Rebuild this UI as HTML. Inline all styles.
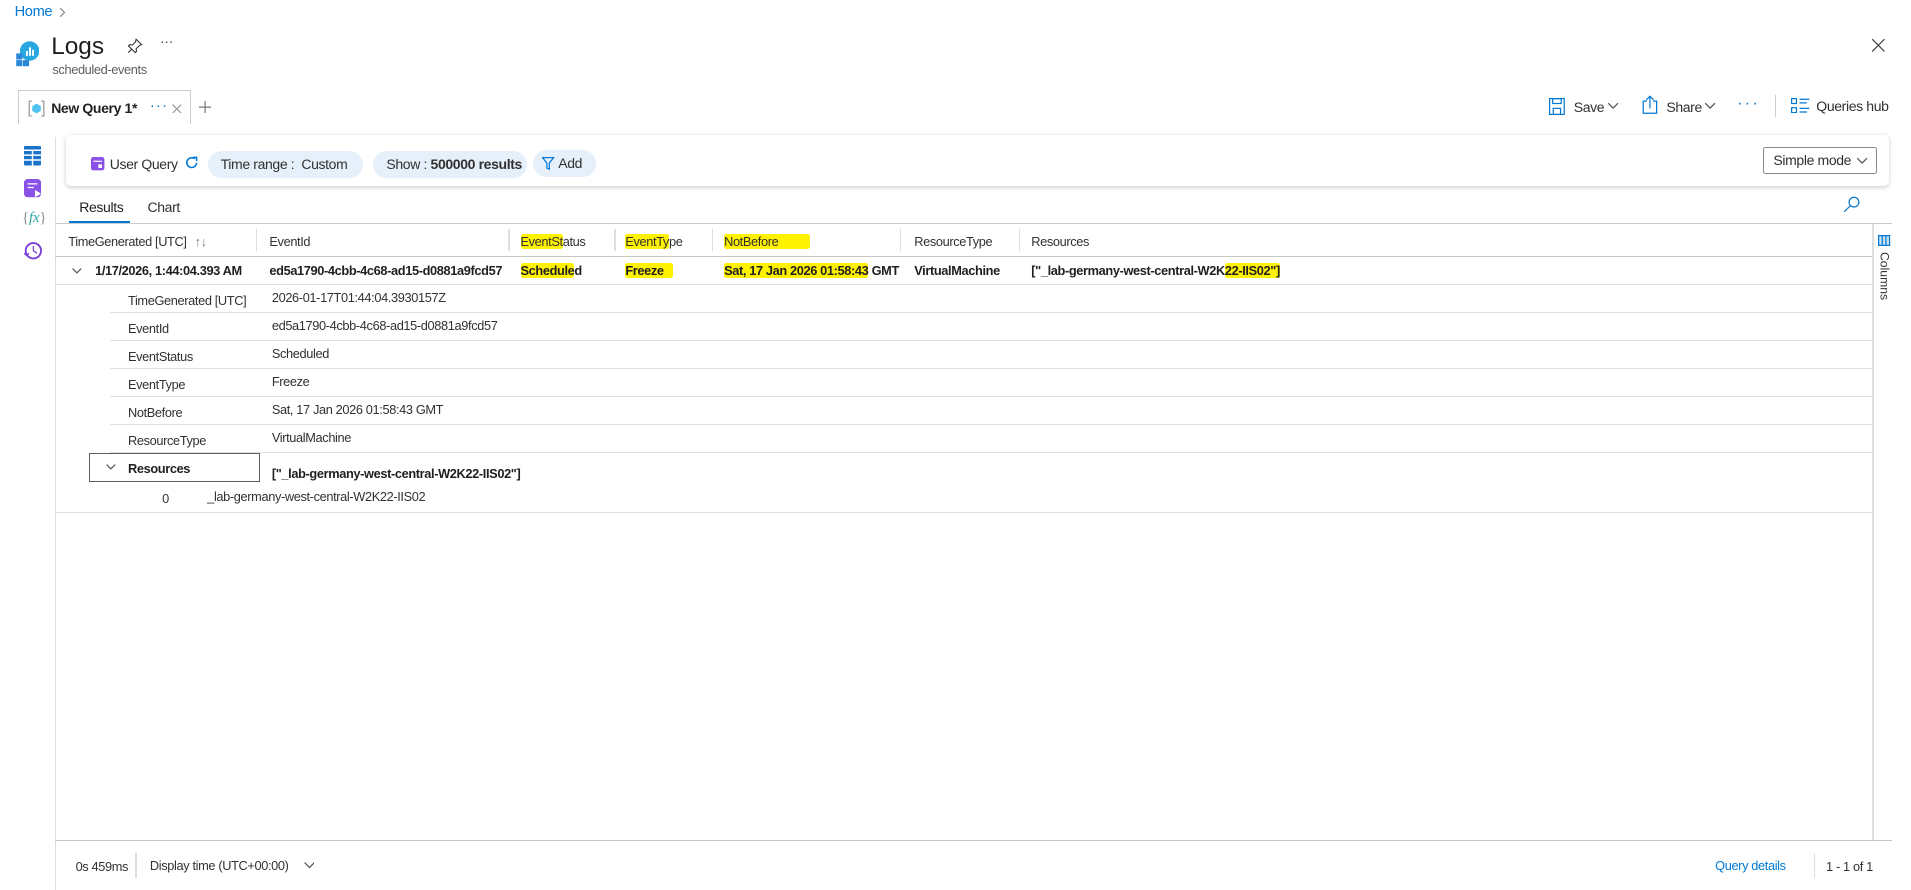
<!DOCTYPE html>
<html><head><meta charset="utf-8">
<style>
html,body{margin:0;padding:0;background:#fff;overflow:hidden}
body{zoom:1.219;width:1568px;height:730px;position:relative;font-family:"Liberation Sans",sans-serif;color:#323130;font-size:10.5px;letter-spacing:-0.3px}
.a{position:absolute;white-space:nowrap}
.hl{background:#fff200;border-radius:2px}
.line{position:absolute;background:#e1dfdd;height:1px}
.pill{position:absolute;height:22px;border-radius:11px;background:#e5f0fb;font-size:11.5px;line-height:22px;color:#323130;white-space:nowrap}
.chev{position:absolute}
</style></head><body>
<div class="a" style="left:12px;top:3px;font-size:12px;color:#0078d4">Home</div>
<svg class="chev" style="left:48px;top:6px" width="6" height="9" viewBox="0 0 6 9"><path d="M1 1l3.5 3.5L1 8" stroke="#888" fill="none"/></svg>
<svg class="a" style="left:12px;top:33px" width="20" height="22" viewBox="0 0 20 22">
<circle cx="12" cy="9" r="8" fill="#29a7e0"/><rect x="9" y="9" width="1.6" height="4" fill="#fff"/><rect x="11.5" y="6" width="1.6" height="7" fill="#fff"/><rect x="14" y="8" width="1.6" height="5" fill="#fff"/>
<rect x="1" y="11" width="5" height="5" fill="#2b88d8"/><rect x="1" y="16.5" width="5" height="5" fill="#2b88d8"/><rect x="6.5" y="16.5" width="5" height="5" fill="#2b88d8"/>
</svg>
<div class="a" style="left:42px;top:27px;font-size:20px;color:#201f1e;letter-spacing:0">Logs</div>
<svg class="a" style="left:104px;top:31px" width="13" height="13" viewBox="0 0 13 13"><path d="M7.5 1l4.5 4.5-2 .8-2.5 2.5.3 2.2-1 1L1.2 6.5l1-1 2.2.3 2.5-2.5z M4 9l-3 3" stroke="#333" fill="none" stroke-width=".9"/></svg>
<div class="a" style="left:131px;top:28px;font-size:12px;color:#555">···</div>
<div class="a" style="left:43px;top:51px;font-size:10.5px;color:#605e5c">scheduled-events</div>
<svg class="a" style="left:1535px;top:31px" width="12" height="12" viewBox="0 0 12 12"><path d="M1 1l10 10M11 1L1 11" stroke="#444" stroke-width="1"/></svg>

<div class="a" style="left:15px;top:74px;width:140px;height:27px;border:1px solid #ccc;border-bottom:none;background:#fff"></div>
<svg class="a" style="left:23px;top:82px" width="14" height="14" viewBox="0 0 14 14"><path d="M3 1H1v12h2M11 1h2v12h-2" stroke="#999" fill="none"/><path d="M7 3l3.5 2v4L7 11 3.5 9V5z" fill="#50c3f0"/></svg>
<div class="a" style="left:42px;top:82px;font-size:11.5px;font-weight:bold;color:#201f1e">New Query 1*</div>
<div class="a" style="left:123px;top:80px;font-size:12px;color:#0078d4;letter-spacing:1px">···</div>
<svg class="a" style="left:141px;top:85px" width="8" height="8" viewBox="0 0 8 8"><path d="M.5.5l7 7M7.5.5l-7 7" stroke="#999"/></svg>
<svg class="a" style="left:163px;top:83px" width="10" height="10" viewBox="0 0 10 10"><path d="M5 0v10M0 5h10" stroke="#777"/></svg>

<svg class="a" style="left:1271px;top:80px" width="13" height="14" viewBox="0 0 13 14"><rect x=".5" y=".5" width="12" height="13" fill="none" stroke="#0078d4"/><rect x="3" y=".5" width="7" height="4" fill="none" stroke="#0078d4"/><rect x="3.5" y="8.5" width="6" height="5" fill="none" stroke="#0078d4"/></svg>
<div class="a" style="left:1291px;top:81px;font-size:11.5px">Save</div>
<svg class="chev" style="left:1318px;top:84px" width="10" height="6" viewBox="0 0 10 6"><path d="M1 1l4 4 4-4" stroke="#555" fill="none"/></svg>
<svg class="a" style="left:1347px;top:78px" width="13" height="16" viewBox="0 0 13 16"><path d="M4 5H1v10h11V5H9" fill="none" stroke="#0078d4"/><path d="M6.5 11V1M3.5 4l3-3 3 3" fill="none" stroke="#0078d4"/></svg>
<div class="a" style="left:1367px;top:81px;font-size:11.5px">Share</div>
<svg class="chev" style="left:1398px;top:84px" width="10" height="6" viewBox="0 0 10 6"><path d="M1 1l4 4 4-4" stroke="#555" fill="none"/></svg>
<div class="a" style="left:1425px;top:78px;font-size:13px;color:#0078d4;letter-spacing:2px">···</div>
<div class="a" style="left:1456px;top:78px;width:1px;height:18px;background:#ccc"></div>
<svg class="a" style="left:1469px;top:80px" width="16" height="13" viewBox="0 0 16 13"><rect x=".5" y=".5" width="4" height="4" fill="none" stroke="#0078d4"/><rect x=".5" y="8" width="4" height="4" fill="none" stroke="#0078d4"/><path d="M7 1h8M7 4h6M7 8.5h8M7 11.5h6" stroke="#0078d4"/></svg>
<div class="a" style="left:1490px;top:80px;font-size:11.5px">Queries hub</div>

<svg class="a" style="left:20px;top:120px" width="14" height="16" viewBox="0 0 14 16"><rect width="14" height="16" rx="1" fill="#1a73c9"/><path d="M0 3.5h14M0 7.5h14M0 11.5h14M7 3.5V16" stroke="#fff" stroke-width="1.2"/></svg>
<svg class="a" style="left:20px;top:147px" width="15" height="16" viewBox="0 0 15 16"><rect width="14" height="15" rx="3" fill="#8a52e6"/><path d="M3 4h8M3 7h5" stroke="#fff"/><path d="M9 9l5 3-5 3z" fill="#fff"/></svg>
<div class="a" style="left:18px;top:172px;font-size:12px;color:#2aa39e;font-style:italic;font-family:'Liberation Serif',serif;letter-spacing:0"><span style="color:#888;font-style:normal">{</span>fx<span style="color:#888;font-style:normal">}</span></div>
<svg class="a" style="left:19px;top:198px" width="16" height="16" viewBox="0 0 16 16"><circle cx="8.5" cy="8" r="6.3" fill="none" stroke="#7a3ed6" stroke-width="1.5"/><path d="M8.5 4v4l3 2" stroke="#7a3ed6" fill="none"/><path d="M1 10l2 2 2-2" stroke="#7a3ed6" fill="none"/></svg>
<div class="a" style="left:45px;top:112px;width:1px;height:618px;background:#e1dfdd"></div>

<div class="a" style="left:54px;top:111px;width:1496px;height:42px;background:#fff;border-radius:4px;box-shadow:0 1px 4px rgba(0,0,0,.2)"></div>
<svg class="a" style="left:75px;top:129px" width="11" height="11" viewBox="0 0 11 11"><rect width="11" height="11" rx="2" fill="#8a52e6"/><path d="M2 3.5h7" stroke="#fff"/><rect x="6" y="6" width="3" height="3" fill="#fff"/></svg>
<div class="a" style="left:90px;top:128px;font-size:11.5px;color:#323130">User Query</div>
<svg class="a" style="left:152px;top:128px" width="11" height="11" viewBox="0 0 11 11"><path d="M9.5 5.5A4 4 0 1 1 8 2.3" stroke="#0078d4" fill="none" stroke-width="1.3"/><path d="M6.5 1.2h3v3" stroke="#0078d4" fill="none" stroke-width="1.3"/></svg>
<div class="pill" style="left:171px;top:124px;width:127px"><span style="margin-left:10px">Time range :&nbsp; Custom</span></div>
<div class="pill" style="left:306px;top:124px;width:126px"><span style="margin-left:11px">Show : <b>500000 results</b></span></div>
<div class="pill" style="left:437px;top:123px;width:52px"><svg style="position:absolute;left:8px;top:6px" width="10" height="11" viewBox="0 0 10 11"><path d="M.5 .5h9L6 5v5L4 9V5z" stroke="#0078d4" fill="none"/></svg><span style="margin-left:21px">Add</span></div>
<div class="a" style="left:1446px;top:121px;width:92px;height:20px;border:1px solid #8a8886;border-radius:2px;font-size:11.5px;line-height:20px"><span style="margin-left:8px">Simple mode</span><svg style="position:absolute;right:6px;top:7px" width="10" height="6" viewBox="0 0 10 6"><path d="M1 1l4 4 4-4" stroke="#555" fill="none"/></svg></div>

<div class="a" style="left:65px;top:163px;font-size:11.5px;color:#201f1e">Results</div>
<div class="a" style="left:121px;top:163px;font-size:11.5px;color:#323130">Chart</div>
<div class="a" style="left:57px;top:181px;width:50px;height:2px;background:#0078d4"></div>
<svg class="a" style="left:1512px;top:161px" width="14" height="14" viewBox="0 0 14 14"><circle cx="9" cy="5" r="4" fill="none" stroke="#0078d4"/><path d="M6 8L1 13" stroke="#0078d4"/></svg>
<div class="a" style="left:45px;top:183px;width:1507px;height:1px;background:#ccc"></div>

<div class="a" style="left:56px;top:192px">TimeGenerated [UTC] <span style="color:#777;margin-left:4px">&#8593;&#8595;</span></div>
<div class="a" style="left:221px;top:192px">EventId</div>
<div class="a" style="left:427px;top:192px"><span class="hl">EventSt</span>atus</div>
<div class="a" style="left:513px;top:192px"><span class="hl">EventTy</span>pe</div>
<div class="a" style="left:594px;top:192px"><span class="hl" style="padding-right:26px">NotBefore</span></div>
<div class="a" style="left:750px;top:192px">ResourceType</div>
<div class="a" style="left:846px;top:192px">Resources</div>
<div class="a" style="left:210px;top:188px;width:1px;height:18px;background:#e1dfdd"></div>
<div class="a" style="left:417px;top:188px;width:1px;height:18px;background:#e1dfdd"></div>
<div class="a" style="left:504px;top:188px;width:1px;height:18px;background:#e1dfdd"></div>
<div class="a" style="left:584px;top:188px;width:1px;height:18px;background:#e1dfdd"></div>
<div class="a" style="left:738px;top:188px;width:1px;height:18px;background:#e1dfdd"></div>
<div class="a" style="left:836px;top:188px;width:1px;height:18px;background:#e1dfdd"></div>
<div class="a" style="left:45px;top:210px;width:1491px;height:1px;background:#c8c6c4"></div>

<div class="a" style="left:1536px;top:184px;width:1px;height:506px;background:#e1dfdd"></div>
<svg class="a" style="left:1541px;top:193px" width="10" height="9" viewBox="0 0 10 9"><rect x=".5" y=".5" width="9" height="8" fill="#c7e0f4" stroke="#0078d4"/><path d="M3.5 .5v8M6.5 .5v8" stroke="#0078d4"/></svg>
<div class="a" style="left:1540px;top:207px;font-size:10px;writing-mode:vertical-rl;color:#323130;letter-spacing:0">Columns</div>

<svg class="chev" style="left:59px;top:220px" width="8" height="5" viewBox="0 0 8 5"><path d="M.5.5l3.5 3.5 3.5-3.5" stroke="#555" fill="none"/></svg>
<div class="a" style="left:78px;top:216px;font-weight:bold;color:#201f1e">1/17/2026, 1:44:04.393 AM</div>
<div class="a" style="left:221px;top:216px;font-weight:bold;color:#201f1e">ed5a1790-4cbb-4c68-ad15-d0881a9fcd57</div>
<div class="a" style="left:427px;top:216px;font-weight:bold;color:#201f1e"><span class="hl">Schedule</span>d</div>
<div class="a" style="left:513px;top:216px;font-weight:bold;color:#201f1e"><span class="hl" style="padding-right:8px">Freeze</span></div>
<div class="a" style="left:594px;top:216px;font-weight:bold;color:#201f1e"><span class="hl">Sat, 17 Jan 2026 01:58:43</span> GMT</div>
<div class="a" style="left:750px;top:216px;font-weight:bold;color:#201f1e">VirtualMachine</div>
<div class="a" style="left:846px;top:216px;font-weight:bold;color:#201f1e">["_lab-germany-west-central-W2K<span class="hl">22-IIS02"]</span></div>
<div class="line" style="left:45px;top:233px;width:1491px"></div>

<div class="a" style="left:105px;top:240px">TimeGenerated [UTC]</div><div class="a" style="left:223px;top:238px">2026-01-17T01:44:04.3930157Z</div>
<div class="line" style="left:90px;top:256px;width:1446px"></div>
<div class="a" style="left:105px;top:263px">EventId</div><div class="a" style="left:223px;top:261px">ed5a1790-4cbb-4c68-ad15-d0881a9fcd57</div>
<div class="line" style="left:90px;top:279px;width:1446px"></div>
<div class="a" style="left:105px;top:286px">EventStatus</div><div class="a" style="left:223px;top:284px">Scheduled</div>
<div class="line" style="left:90px;top:302px;width:1446px"></div>
<div class="a" style="left:105px;top:309px">EventType</div><div class="a" style="left:223px;top:307px">Freeze</div>
<div class="line" style="left:90px;top:325px;width:1446px"></div>
<div class="a" style="left:105px;top:332px">NotBefore</div><div class="a" style="left:223px;top:330px">Sat, 17 Jan 2026 01:58:43 GMT</div>
<div class="line" style="left:90px;top:348px;width:1446px"></div>
<div class="a" style="left:105px;top:355px">ResourceType</div><div class="a" style="left:223px;top:353px">VirtualMachine</div>
<div class="line" style="left:90px;top:371px;width:1446px"></div>
<div class="a" style="left:73px;top:372px;width:139px;height:22px;border:1px solid #605e5c"></div>
<svg class="chev" style="left:87px;top:381px" width="8" height="5" viewBox="0 0 8 5"><path d="M.5.5l3.5 3.5 3.5-3.5" stroke="#555" fill="none"/></svg>
<div class="a" style="left:105px;top:378px;font-weight:bold;color:#201f1e">Resources</div>
<div class="a" style="left:223px;top:382px;font-weight:bold;color:#201f1e">["_lab-germany-west-central-W2K22-IIS02"]</div>
<div class="a" style="left:133px;top:403px">0</div>
<div class="a" style="left:170px;top:401px">_lab-germany-west-central-W2K22-IIS02</div>
<div class="line" style="left:45px;top:420px;width:1491px"></div>

<div class="a" style="left:45px;top:689px;width:1507px;height:1px;background:#c8c6c4"></div>
<div class="a" style="left:62px;top:705px">0s 459ms</div>
<div class="a" style="left:111px;top:700px;width:1px;height:20px;background:#ddd"></div>
<div class="a" style="left:123px;top:704px">Display time (UTC+00:00)</div>
<svg class="chev" style="left:249px;top:707px" width="9" height="6" viewBox="0 0 9 6"><path d="M.5.5l4 4 4-4" stroke="#555" fill="none"/></svg>
<div class="a" style="left:1407px;top:704px;color:#0078d4">Query details</div>
<div class="a" style="left:1488px;top:700px;width:1px;height:20px;background:#ddd"></div>
<div class="a" style="left:1498px;top:705px">1 - 1 of 1</div>
</body></html>
